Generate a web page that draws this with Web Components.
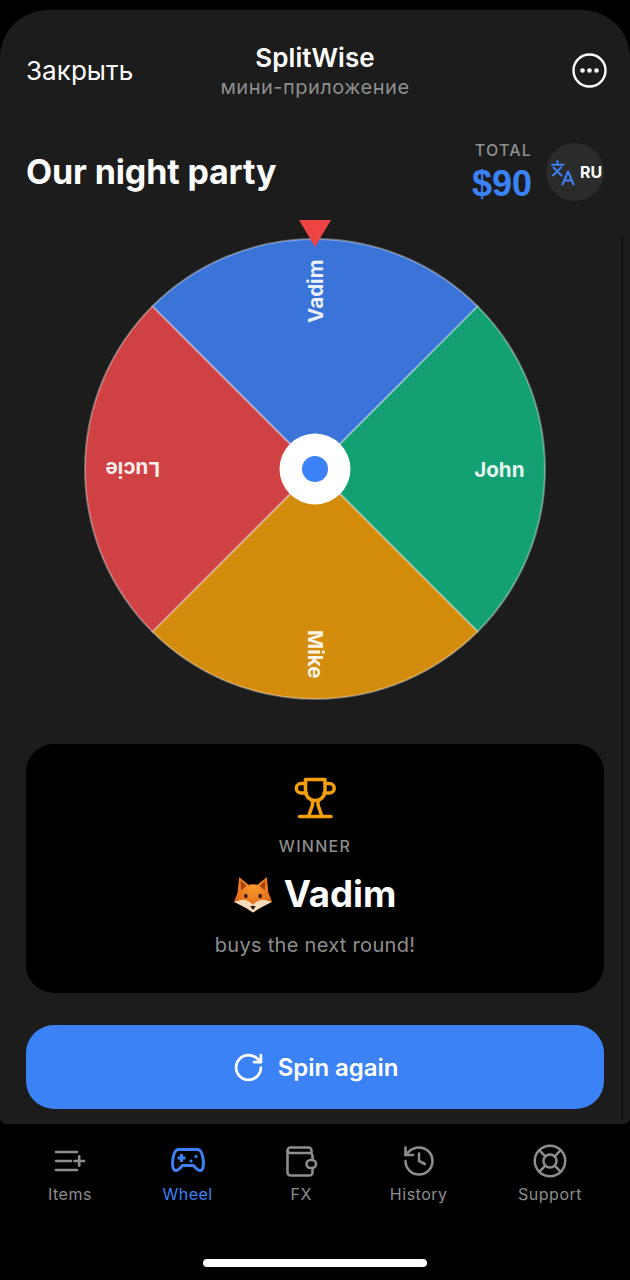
<!DOCTYPE html>
<html lang="en">
<head>
<meta charset="utf-8">
<title>SplitWise</title>
<style>
  html, body { margin: 0; padding: 0; background: #000; }
  body { width: 630px; height: 1280px; overflow: hidden; font-family: Inter, "Noto Sans", sans-serif; }
</style>
</head>
<body>
<app-shell>
  <top-bar></top-bar>
  <party-header title="Our night party" total="$90" lang="RU"></party-header>
  <spin-wheel></spin-wheel>
  <winner-card name="Vadim" note="buys the next round!"></winner-card>
  <spin-button>Spin again</spin-button>
</app-shell>
<tab-bar>
  <tab-item label="Items" icon="items"></tab-item>
  <tab-item label="Wheel" icon="wheel" active></tab-item>
  <tab-item label="FX" icon="fx"></tab-item>
  <tab-item label="History" icon="history"></tab-item>
  <tab-item label="Support" icon="support"></tab-item>
</tab-bar>

<script>
const TAB_ICONS = {
  items: `<svg viewBox="0 0 36 36" fill="none" stroke="currentColor" stroke-width="2.6" stroke-linecap="round">
    <path d="M4 9H25M4 18H19M4 27H25M22.5 18H32M27.2 13.2V22.8"/></svg>`,
  wheel: `<svg viewBox="0 0 36 36" fill="none" stroke="currentColor" stroke-width="3" stroke-linejoin="round">
    <path d="M8.5 6.5H27.5C30.5 6.5 32 9.5 33 15C34 21.5 33.5 27.5 30 27.5C27.5 27.5 25.5 24.5 23.5 22.5H12.5C10.5 24.5 8.5 27.5 6 27.5C2.5 27.5 2 21.5 3 15C4 9.5 5.5 6.5 8.5 6.5Z"/>
    <path d="M11.5 11V19M7.5 15H15.5" stroke-width="3"/>
    <circle cx="26" cy="13.5" r="1.6" fill="currentColor" stroke="none"/>
    <circle cx="21" cy="18" r="1.6" fill="currentColor" stroke="none"/></svg>`,
  fx: `<svg viewBox="0 0 36 36" fill="none" stroke="currentColor" stroke-width="2.6" stroke-linecap="round" stroke-linejoin="round">
    <path d="M4.5 8V29.5A3 3 0 0 0 7.5 32.5H26.5A3 3 0 0 0 29.5 29.5V25"/>
    <path d="M29.5 17V13A3 3 0 0 0 26.5 10H7A2.8 2.8 0 0 1 4.5 7.5A3 3 0 0 1 7.5 4.5H25.5A3 3 0 0 1 28.5 7.5V10"/>
    <path d="M29 17H27.5A4 4 0 0 0 27.5 25H29A4 4 0 0 0 29 17Z"/></svg>`,
  history: `<svg viewBox="0 0 24 24" fill="none" stroke="currentColor" stroke-width="1.7" stroke-linecap="round" stroke-linejoin="round">
    <path d="M3 12a9 9 0 1 0 9-9 9.75 9.75 0 0 0-6.74 2.74L3 8"/><path d="M3 3v5h5"/><path d="M12 7v5l4 2"/></svg>`,
  support: `<svg viewBox="1 1 22 22" fill="none" stroke="currentColor" stroke-width="1.5" stroke-linecap="round">
    <circle cx="12" cy="12" r="9.3"/><circle cx="12" cy="12" r="4"/>
    <path d="m5.4 5.4 3.8 3.8M14.8 9.2l3.8-3.8M14.8 14.8l3.8 3.8M9.2 14.8l-3.8 3.8"/></svg>`,
};

class AppShell extends HTMLElement {
  constructor() {
    super();
    this.attachShadow({ mode: 'open' }).innerHTML = `
      <style>
        :host {
          display: block;
          position: relative;
          box-sizing: border-box;
          height: 1114px;
          margin-top: 10px;
          padding: 0 26px;
          background: #1c1c1c;
          border-radius: 48px 48px 6px 6px;
          color: #fff;
        }
        .thumb {
          position: absolute;
          right: 6px;
          top: 226px;
          bottom: 4px;
          width: 3px;
          background: #141414;
        }
      </style>
      <slot></slot>
      <div class="thumb"></div>
    `;
  }
}

class TopBar extends HTMLElement {
  constructor() {
    super();
    this.attachShadow({ mode: 'open' }).innerHTML = `
      <style>
        :host {
          display: grid;
          grid-template-columns: 1fr auto 1fr;
          align-items: center;
          height: 64px;
          padding-top: 29px;
        }
        .close { font-size: 26px; line-height: 32px; letter-spacing: 0.05px; }
        .middle { text-align: center; }
        .name { font-size: 26px; font-weight: 600; line-height: 32px; letter-spacing: 0.1px; }
        .sub { font-size: 20px; line-height: 26px; color: #8e8e8e; letter-spacing: 0.5px; }
        .more { justify-self: end; margin-right: -3px; margin-bottom: 1px; width: 35px; height: 35px; display: block; }
      </style>
      <div class="close">Закрыть</div>
      <div class="middle">
        <div class="name">SplitWise</div>
        <div class="sub">мини-приложение</div>
      </div>
      <svg class="more" viewBox="0 0 35 35">
        <circle cx="17.5" cy="17.5" r="16" fill="none" stroke="#fff" stroke-width="2.4"/>
        <circle cx="10.5" cy="17.5" r="2.3" fill="#fff"/>
        <circle cx="17.5" cy="17.5" r="2.3" fill="#fff"/>
        <circle cx="24.5" cy="17.5" r="2.3" fill="#fff"/>
      </svg>
    `;
  }
}

class PartyHeader extends HTMLElement {
  constructor() {
    super();
    const title = this.getAttribute('title');
    const total = this.getAttribute('total');
    const lang = this.getAttribute('lang');
    this.attachShadow({ mode: 'open' }).innerHTML = `
      <style>
        :host {
          display: flex;
          align-items: center;
          height: 58px;
          margin-top: 40px;
        }
        h1 { flex: 1; margin: 0; font-size: 34px; line-height: 58px; font-weight: 700; letter-spacing: -0.14px; }
        .total { text-align: right; margin-right: 14px; margin-top: 1px; }
        .total-label { font-size: 16px; line-height: 18px; letter-spacing: 1.2px; color: #8e8e8e; font-weight: 500; }
        .total-value { font-size: 36px; line-height: 40px; font-weight: 700; color: #3b82f6; font-family: "Liberation Sans", Inter, sans-serif; margin-top: 5px; }
        .lang {
          display: flex;
          align-items: center;
          justify-content: center;
          gap: 5px;
          width: 58px;
          height: 58px;
          border-radius: 50%;
          background: #2b2b2b;
          font-size: 16px;
          font-weight: 700;
        }
        .lang svg { width: 24px; height: 26px; display: block; margin-top: 2px; margin-left: 3px; }
      </style>
      <h1>${title}</h1>
      <div class="total">
        <div class="total-label">TOTAL</div>
        <div class="total-value">${total}</div>
      </div>
      <div class="lang">
        <svg viewBox="0 0 24 26" fill="none" stroke="#3b82f6" stroke-width="2" stroke-linecap="round" stroke-linejoin="round">
          <path d="M6.5 1V4.5M1 4.8H12.5M2.5 7.5L10.5 15.5M10 7.5L2 15.5"/>
          <path d="M11.5 24.5L17 11.5L22.5 24.5M13.5 20.5H20.5"/>
        </svg>
        <span>${lang}</span>
      </div>
    `;
  }
}

class SpinWheel extends HTMLElement {
  constructor() {
    super();
    const players = [
      { name: 'Vadim', color: '#3a74d8', from: -135, to: -45 },
      { name: 'John', color: '#13a173', from: -45, to: 45 },
      { name: 'Mike', color: '#d38c0c', from: 45, to: 135 },
      { name: 'Lucie', color: '#d04143', from: 135, to: 225 },
    ];
    const radius = 230;
    const point = (deg) => {
      const rad = (deg * Math.PI) / 180;
      return `${(radius * Math.cos(rad)).toFixed(2)} ${(radius * Math.sin(rad)).toFixed(2)}`;
    };
    const sectors = players
      .map((p) => `<path d="M0 0L${point(p.from)}A${radius} ${radius} 0 0 1 ${point(p.to)}Z" fill="${p.color}" stroke="rgba(255,255,255,0.35)" stroke-width="2"/>`)
      .join('');
    const labels = players
      .map((p) => `<text transform="rotate(${(p.from + p.to) / 2}) translate(209.5 7.5)" text-anchor="end">${p.name}</text>`)
      .join('');
    this.attachShadow({ mode: 'open' }).innerHTML = `
      <style>
        :host {
          display: block;
          height: 484px;
          margin-top: 19px;
        }
        svg { display: block; margin: 0 auto; width: 470px; height: 484px; }
        text { font-family: Inter, "Noto Sans", sans-serif; font-size: 20.6px; font-weight: 700; fill: rgba(255,255,255,0.92); }
      </style>
      <svg viewBox="-235 -249 470 484">
        ${sectors}
        <g>${labels}</g>
        <circle r="35.5" fill="#fff"/>
        <circle r="13" fill="#3b82f6"/>
        <path d="M-16 -249H16L0 -222Z" fill="#ef4444"/>
      </svg>
    `;
  }
}

class WinnerCard extends HTMLElement {
  constructor() {
    super();
    const name = this.getAttribute('name');
    const note = this.getAttribute('note');
    this.attachShadow({ mode: 'open' }).innerHTML = `
      <style>
        :host {
          display: flex;
          flex-direction: column;
          align-items: center;
          box-sizing: border-box;
          height: 249px;
          margin-top: 40px;
          padding-top: 33px;
          background: #000;
          border-radius: 28px;
        }
        .trophy { display: block; width: 42px; height: 43px; }
        .label { margin-top: 16px; font-size: 16px; line-height: 20px; letter-spacing: 1.3px; color: #8e8e8e; font-weight: 500; }
        .winner { display: flex; align-items: center; gap: 12px; margin-top: 15px; font-size: 36.6px; line-height: 46px; font-weight: 700; }
        .fox { display: block; width: 38px; height: 37px; }
        .note { margin-top: 15px; font-size: 20px; line-height: 26px; color: #8e8e8e; letter-spacing: 0.3px; }
      </style>
      <svg class="trophy" viewBox="0 0 42 43" fill="none" stroke="#f59e0b" stroke-width="3.5" stroke-linecap="round" stroke-linejoin="round">
        <path d="M11.5 2.5H31V14A9.75 9.5 0 0 1 11.5 14Z"/>
        <path d="M11.5 6.5H7A4.7 4.7 0 0 0 7 15.9H12.5"/>
        <path d="M31 6.5H35.5A4.7 4.7 0 0 1 35.5 15.9H30"/>
        <path d="M18.5 24V28L14.5 39.5M24 24V28L28 39.5"/>
        <path d="M5.5 39.5H37"/>
      </svg>
      <div class="label">WINNER</div>
      <div class="winner">
        <svg class="fox" viewBox="0 0 37 36">
          <defs>
            <radialGradient id="fur" cx="50%" cy="30%" r="70%">
              <stop offset="0" stop-color="#f79a2e"/>
              <stop offset="0.7" stop-color="#e8701a"/>
              <stop offset="1" stop-color="#c9500f"/>
            </radialGradient>
          </defs>
          <path d="M5 1L14 8.5Q18.5 7.5 23 8.5L32 1L33.5 16L37 25L25 31L18.5 35.5L12 31L0 25L3.5 16Z" fill="url(#fur)"/>
          <path d="M6.5 4.5L12 9.5L7 14ZM30.5 4.5L25 9.5L30 14Z" fill="#a8400e"/>
          <path d="M0 25L8 23Q14 23 18.5 28Q23 23 29 23L37 25L25 31.5L18.5 35.5L12 31.5Z" fill="#f6dcbd"/>
          <ellipse cx="11.5" cy="19.5" rx="1.7" ry="2.2" fill="#33190c"/>
          <ellipse cx="25.5" cy="19.5" rx="1.7" ry="2.2" fill="#33190c"/>
          <path d="M15.8 29.5Q18.5 28.3 21.2 29.5L18.5 33Z" fill="#2a1a14"/>
        </svg>
        <span>${name}</span>
      </div>
      <div class="note">${note}</div>
    `;
  }
}

class SpinButton extends HTMLElement {
  constructor() {
    super();
    this.attachShadow({ mode: 'open' }).innerHTML = `
      <style>
        :host {
          display: flex;
          align-items: center;
          justify-content: center;
          gap: 13px;
          height: 84px;
          margin-top: 32px;
          background: #3b82f6;
          border-radius: 28px;
          color: #fff;
          font-size: 24px;
          font-weight: 600;
          letter-spacing: -0.05px;
        }
        svg { display: block; width: 33px; height: 33px; }
      </style>
      <svg viewBox="0 0 24 24" fill="none" stroke="#fff" stroke-width="2" stroke-linecap="round" stroke-linejoin="round">
        <path d="M21 12a9 9 0 1 1-9-9c2.52 0 4.93 1 6.74 2.74L21 8"/><path d="M21 3v5h-5"/>
      </svg>
      <slot></slot>
    `;
  }
}

class TabBar extends HTMLElement {
  constructor() {
    super();
    this.attachShadow({ mode: 'open' }).innerHTML = `
      <style>
        :host {
          display: flex;
          flex-direction: column;
          height: 156px;
          box-sizing: border-box;
          background: #000;
        }
        nav {
          display: flex;
          justify-content: space-between;
          padding: 19px 48px 0;
        }
        .home {
          align-self: center;
          width: 224px;
          height: 8px;
          margin-top: auto;
          margin-bottom: 13px;
          border-radius: 4px;
          background: #fff;
        }
      </style>
      <nav><slot></slot></nav>
      <div class="home"></div>
    `;
  }
}

class TabItem extends HTMLElement {
  constructor() {
    super();
    const label = this.getAttribute('label');
    const icon = TAB_ICONS[this.getAttribute('icon')];
    this.attachShadow({ mode: 'open' }).innerHTML = `
      <style>
        :host {
          display: flex;
          flex-direction: column;
          align-items: center;
          min-width: 36px;
          color: #8e8e8e;
          font-size: 16px;
          letter-spacing: 0.5px;
          line-height: 20px;
        }
        :host([active]) { color: #3b82f6; }
        .icon { width: 36px; height: 36px; margin-bottom: 5px; }
        .icon svg { display: block; width: 36px; height: 36px; }
      </style>
      <div class="icon">${icon}</div>
      <div>${label}</div>
    `;
  }
}

customElements.define('app-shell', AppShell);
customElements.define('top-bar', TopBar);
customElements.define('party-header', PartyHeader);
customElements.define('spin-wheel', SpinWheel);
customElements.define('winner-card', WinnerCard);
customElements.define('spin-button', SpinButton);
customElements.define('tab-bar', TabBar);
customElements.define('tab-item', TabItem);
</script>
</body>
</html>
